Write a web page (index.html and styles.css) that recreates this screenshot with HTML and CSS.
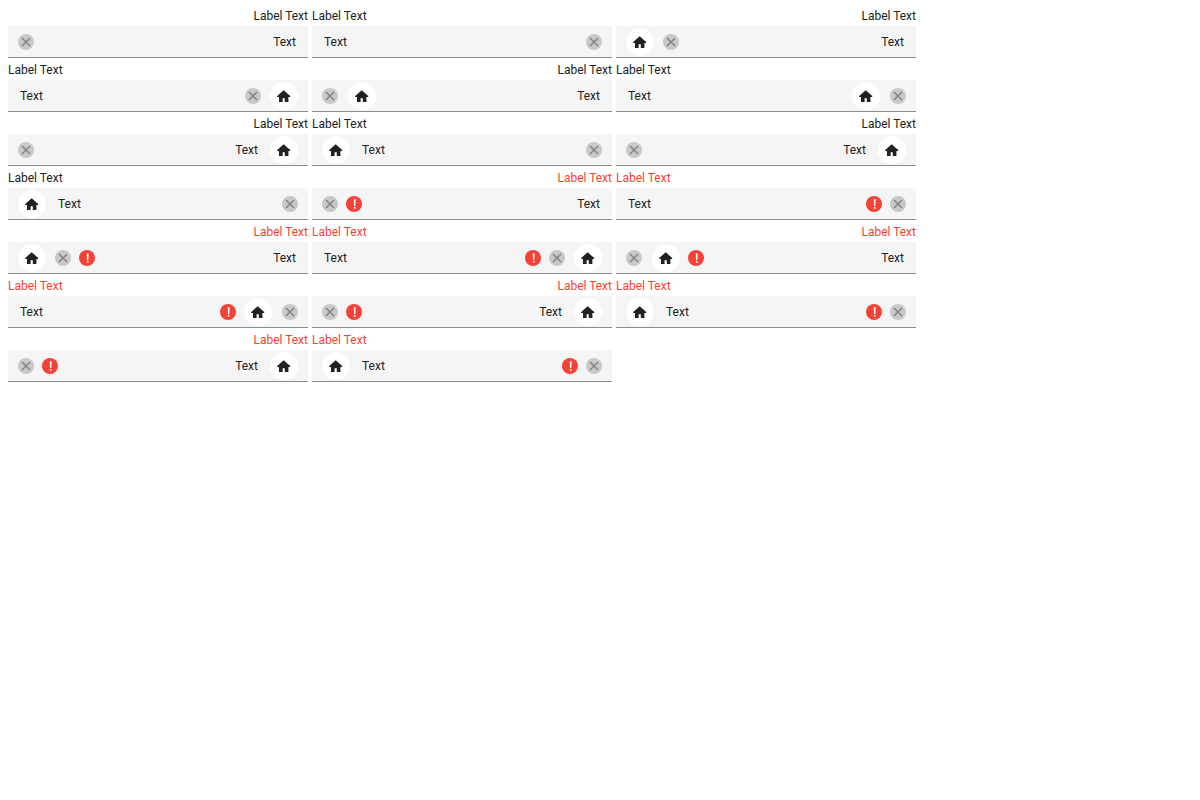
FILE: index.html
```
<!DOCTYPE html>
<html lang="en">
<head>
<meta charset="utf-8">
<title>Text fields</title>
<link rel="stylesheet" href="styles.css">
</head>
<body>
<svg class="sprite" aria-hidden="true">
  <symbol id="home" viewBox="0 0 14 14"><path d="M6.7 1.2.2 7v.9H2V13h3.6V9.2h2.2V13h3.6V7.9h1.8V7z"/></symbol>
  <symbol id="clear" viewBox="0 0 16 16"><path d="M4 4l8 8M12 4l-8 8"/></symbol>
  <symbol id="error" viewBox="0 0 16 16"><path d="M7.8 3.2h1.8L9.4 10H8zM7.9 11.1h1.6v1.6H7.9z"/></symbol>
</svg>
<main class="fields" id="fields"></main>
<script src="fields.js"></script>
</body>
</html>
```
FILE: styles.css
```
body {
  margin: 8px;
  background: #fff;
  color: #212121;
  font: 12px/16px Roboto, sans-serif;
}
.sprite { display: none; }
.fields {
  display: grid;
  grid-template-columns: repeat(auto-fill, 300px);
  gap: 4px;
}
.field {
  display: flex;
  flex-direction: column;
  gap: 2px;
}
.label.invalid { color: #f44336; }
.box {
  display: flex;
  align-items: center;
  height: 31px;
  background: #f5f5f5;
  border-bottom: 1px solid #8c8c8c;
  border-radius: 2px 2px 0 0;
}
.input {
  flex: 1;
  min-width: 0;
  padding: 0 12px;
  border: 0;
  outline: 0;
  background: none;
  color: inherit;
  font: inherit;
}
.affix {
  display: flex;
  align-items: center;
  gap: 8px;
}
.start { padding-inline-start: 10px; }
.end { padding-inline-end: 10px; }
.home, .clear {
  display: flex;
  align-items: center;
  justify-content: center;
  padding: 0;
  border: 0;
  border-radius: 50%;
}
.home {
  width: 28px;
  height: 28px;
  background: #fff;
}
.clear {
  width: 16px;
  height: 16px;
  background: #c8c8c8;
}
.clear + .home { margin-inline-start: 1px; }
.home + .clear { margin-inline-start: 2px; }
.error {
  width: 16px;
  height: 16px;
  border-radius: 50%;
  background: #f44336;
}
.home svg { width: 14px; height: 14px; fill: #212121; }
.clear svg { width: 16px; height: 16px; fill: none; stroke: #7c7c7c; stroke-width: 1.3; }
.error svg { display: block; width: 16px; height: 16px; fill: #fff; }
```
FILE: fields.js
```
// Each variant lists the items before and after the input; it is drawn in both directions.
const variants = [
  [[], ["clear"]],
  [[], ["clear", "home"]],
  [[], ["home", "clear"]],
  [["home"], ["clear"]],
  [["home"], ["clear"]],
  [[], ["error", "clear"]],
  [[], ["error", "clear", "home"]],
  [[], ["error", "home", "clear"]],
  [["home"], ["error", "clear"]],
  [["home"], ["error", "clear"]]
];

function item(name) {
  const icon = `<svg aria-hidden="true"><use href="#${name}"/></svg>`;
  return name === "error"
    ? `<span class="error" role="img" aria-label="Error">${icon}</span>`
    : `<button class="${name}" type="button" aria-label="${name}">${icon}</button>`;
}

function affix(side, names) {
  return names.length ? `<div class="affix ${side}">${names.map(item).join("")}</div>` : "";
}

let count = 0;
function field([start, end], dir) {
  const id = `field-${++count}`;
  const invalid = end.includes("error");
  return `<div class="field" dir="${dir}">
    <label class="label${invalid ? " invalid" : ""}" for="${id}">Label Text</label>
    <div class="box">${affix("start", start)}<input class="input" id="${id}" type="text" value="Text" aria-invalid="${invalid}">${affix("end", end)}</div>
  </div>`;
}

document.getElementById("fields").innerHTML =
  variants.map(v => field(v, "rtl") + field(v, "ltr")).join("");
```
